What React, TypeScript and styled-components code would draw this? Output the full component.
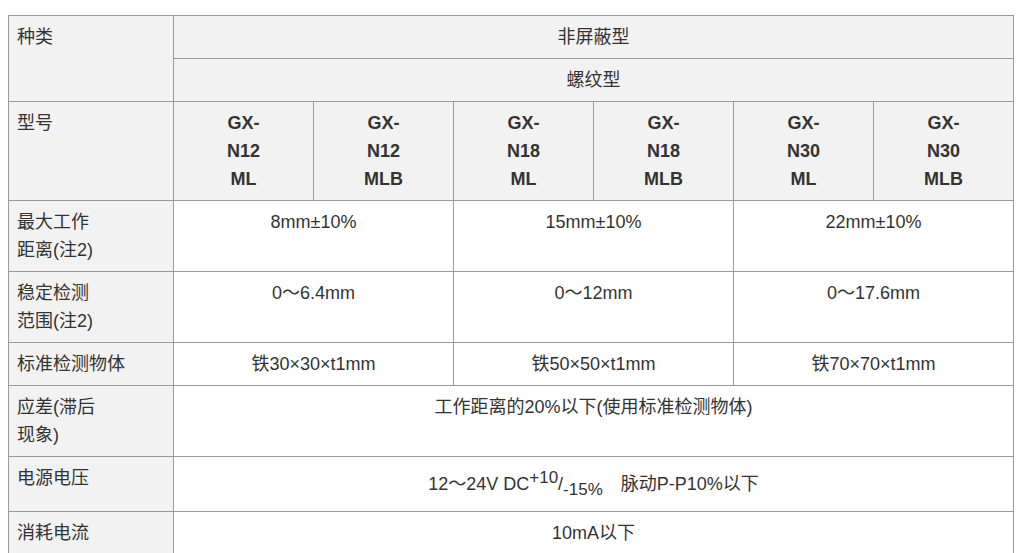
import React from 'react';
import styled, { createGlobalStyle } from 'styled-components';

const GlobalStyle = createGlobalStyle`
    body {
        margin: 0;
        background: #fff;
        font-family: "Liberation Sans", Arial, "Noto Sans CJK SC", sans-serif;
        color: #333;
    }
`;

const Page = styled.div`
    padding: 15px 8px;
`;

const SpecTable = styled.table`
    border-collapse: collapse;
    table-layout: fixed;
    width: 1006px;
    font-size: 18px;
    line-height: 28px;
`;

const Cell = styled.td<{ head?: boolean; bold?: boolean }>`
    border: 1px solid #9a9a9a;
    padding: 7px 8px;
    vertical-align: top;
    text-align: center;
    background: ${props => props.head ? '#f2f2f2' : '#fff'};
    font-weight: ${props => props.bold ? 'bold' : 'normal'};
`;

const Label = styled(Cell)`
    text-align: left;
    background: #f2f2f2;
`;

const Sup = styled.sup`
    font-size: 17px;
`;

const Sub = styled.sub`
    font-size: 17px;
`;

const models = [
    ['GX-', 'N12', 'ML'],
    ['GX-', 'N12', 'MLB'],
    ['GX-', 'N18', 'ML'],
    ['GX-', 'N18', 'MLB'],
    ['GX-', 'N30', 'ML'],
    ['GX-', 'N30', 'MLB'],
];

const triples: { label: React.ReactNode; values: string[] }[] = [
    { label: <>最大工作<br />距离(注2)</>, values: ['8mm±10%', '15mm±10%', '22mm±10%'] },
    { label: <>稳定检测<br />范围(注2)</>, values: ['0〜6.4mm', '0〜12mm', '0〜17.6mm'] },
    { label: '标准检测物体', values: ['铁30×30×t1mm', '铁50×50×t1mm', '铁70×70×t1mm'] },
];

const App = () => {
    return <Page>
        <GlobalStyle />
        <SpecTable>
            <colgroup>
                <col style={{ width: 165 }} />
                {models.map((_, i) => <col key={i} style={{ width: 140 }} />)}
            </colgroup>
            <tbody>
                <tr>
                    <Label rowSpan={2}>种类</Label>
                    <Cell head colSpan={6}>非屏蔽型</Cell>
                </tr>
                <tr>
                    <Cell head colSpan={6}>螺纹型</Cell>
                </tr>
                <tr>
                    <Label>型号</Label>
                    {models.map(m =>
                        <Cell head bold key={m.join('')}>{m[0]}<br />{m[1]}<br />{m[2]}</Cell>
                    )}
                </tr>
                {triples.map((row, i) =>
                    <tr key={i}>
                        <Label>{row.label}</Label>
                        {row.values.map(v => <Cell colSpan={2} key={v}>{v}</Cell>)}
                    </tr>
                )}
                <tr>
                    <Label>应差(滞后<br />现象)</Label>
                    <Cell colSpan={6}>工作距离的20%以下(使用标准检测物体)</Cell>
                </tr>
                <tr>
                    <Label>电源电压</Label>
                    <Cell colSpan={6}>12〜24V DC<Sup>+10</Sup>/<Sub>-15%</Sub>{'\u3000'}脉动P-P10%以下</Cell>
                </tr>
                <tr>
                    <Label>消耗电流</Label>
                    <Cell colSpan={6}>10mA以下</Cell>
                </tr>
            </tbody>
        </SpecTable>
    </Page>
}

export default App;
